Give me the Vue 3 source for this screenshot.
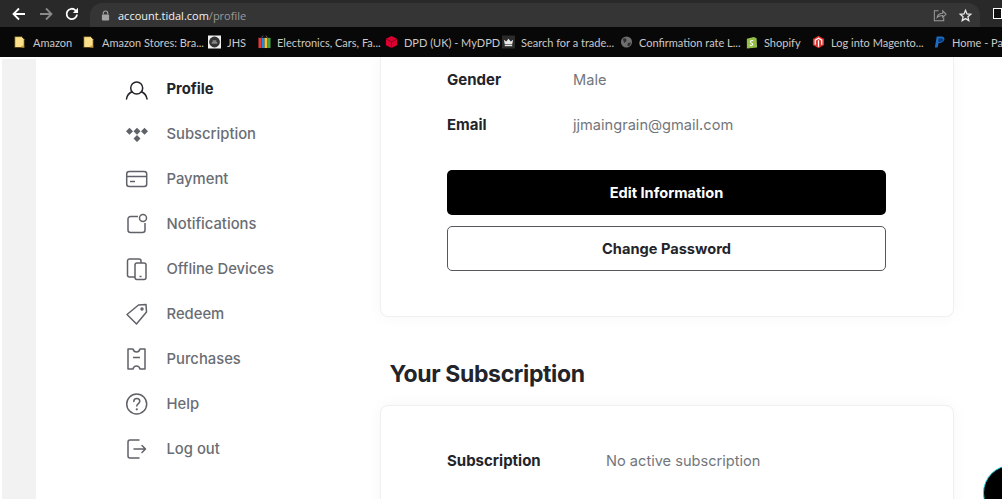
<template>
  <div class="window">
    <!-- Browser toolbar -->
    <header class="toolbar">
      <div class="nav-buttons">
        <svg class="tb-icon" viewBox="0 0 16 16"><path d="M14 8H3M8 2.500 2.500 8 8 13.500" fill="none" stroke="#fff" stroke-width="1.800" /></svg>
        <svg class="tb-icon" viewBox="0 0 16 16"><path d="M2 8h11M8 2.500 13.500 8 8 13.500" fill="none" stroke="#8a8a8a" stroke-width="1.800" /></svg>
        <svg class="tb-icon" viewBox="0 0 16 16"><path d="M13 8.500A5.200 5.200 0 1 1 11.500 4.300L13.500 6.200" fill="none" stroke="#fff" stroke-width="1.800" /><path d="M14 1.800V7H8.800z" fill="#fff" /></svg>
      </div>
      <div class="omnibox">
        <svg class="lock" viewBox="0 0 10 12"><path d="M2.500 5V3.500a2.500 2.500 0 0 1 5 0V5" fill="none" stroke="#a5a5a5" stroke-width="1.200" /><rect x="1" y="5" width="8" height="6.500" rx="1" fill="#a5a5a5" /></svg>
        <span class="url">account.tidal.com<span class="url-path">/profile</span></span>
        <svg class="omni-icon" viewBox="0 0 16 16"><path d="M7 3H2.500v10.500h10V10" fill="none" stroke="#9a9a9a" stroke-width="1.100" /><path d="M5.500 10c.5-3 3-4.500 6-4.500V3l3.500 3.700-3.500 3.300V8c-2.500 0-4.500.5-6 2z" fill="none" stroke="#9a9a9a" stroke-width="1.100" /></svg>
        <svg class="omni-icon star" viewBox="0 0 16 16"><path d="M8 2.500 9.600 6.300l4 .4-3 2.700.9 4L8 11.300l-3.500 2.100.9-4-3-2.700 4-.4z" fill="none" stroke="#e8e8e8" stroke-width="1.400" /></svg>
      </div>
      <div class="ext-box"></div>
    </header>

    <!-- Bookmarks -->
    <nav class="bookmarks">
      <div v-for="b in bookmarks" :key="b.x" class="bookmark" :style="{ width: b.w + 'px' }">
        <svg class="bm-icon" viewBox="0 0 14 14" v-html="bmIcons[b.icon]"></svg>
        <span class="bm-label">{{ b.label }}</span>
      </div>
    </nav>

    <!-- Page -->
    <div class="page">
      <div class="strip"></div>

      <aside class="sidebar">
        <div v-for="item in menu" :key="item.label" class="menu-item" :class="{ active: item.active }">
          <svg class="menu-icon" viewBox="0 0 24 24" v-html="item.svg"></svg>
          <span>{{ item.label }}</span>
        </div>
      </aside>

      <main class="content">
        <section class="card card-top">
          <div class="row"><span class="row-label">Gender</span><span class="row-value">Male</span></div>
          <div class="row"><span class="row-label">Email</span><span class="row-value">jjmaingrain@gmail.com</span></div>
          <button class="btn btn-dark">Edit Information</button>
          <button class="btn btn-light">Change Password</button>
        </section>

        <h2 class="section-title">Your Subscription</h2>

        <section class="card card-sub">
          <div class="row"><span class="row-label wide">Subscription</span><span class="row-value">No active subscription</span></div>
        </section>
      </main>

      <div class="chat-bubble"></div>
    </div>
  </div>
</template>

<script setup>
const bmIcons = {
  folder: '<path d="M.8 1.200h7.400l2.800 2.800v9H.8z" fill="#fde08a" stroke="#3a2c08" stroke-width=".8" /><path d="M8 11h3v2H8z" fill="#c99a3c" />',
  jhs: '<rect x="0" y="0" width="14" height="14" fill="#f0f0f0" /><circle cx="7" cy="7" r="5.800" fill="#333" /><path d="M4 8h6M5 6h4" stroke="#ccc" stroke-width="1" />',
  bars: '<path d="M4 2 5.500 0M10 2 8.500 0" stroke="#888" stroke-width=".8" /><rect x="0.500" y="2.500" width="3.300" height="11" fill="#e53935" /><rect x="3.800" y="2.500" width="3.200" height="11" fill="#1e88e5" /><rect x="7" y="2.500" width="3.200" height="11" fill="#fbc02d" /><rect x="10.200" y="2.500" width="3.300" height="11" fill="#43a047" />',
  dpd: '<path d="M7 .5 13 3.500v7L7 13.500 1 10.500v-7z" fill="#dc0032" /><path d="M1 3.500 7 7l6-3.500M7 7v6.500" stroke="#5c0015" stroke-width=".7" fill="none" />',
  crown: '<rect width="14" height="14" fill="#2b2b2b" /><path d="M2 4.500 4.500 6.500 7 3.500l2.500 3L12 4.500 11 9.500H3z" fill="#e6e6e6" /><rect x="3" y="10" width="8" height="1.500" fill="#e6e6e6" />',
  globe: '<circle cx="7" cy="7" r="6" fill="#6e6e6e" /><path d="M3 3.500 6.500 3 7 6 4.500 8zM8.500 8 12 7.500 10 11.500 8 11z" fill="#2e2e2e" />',
  shopify: '<path d="M2 3.500 9.500 1.500 12.500 3l.5 10-11 1z" fill="#95bf47" /><path d="M8.800 5.500C7 5 5.500 5.800 5.800 7s2.500 1.200 2.500 2.500S6.500 11 5 10.300" fill="none" stroke="#fff" stroke-width="1.100" />',
  magento: '<path d="M7 .3 13 3.800v6.500L7 13.700 1 10.300V3.800z" fill="#e0322d" /><path d="M3.500 10V5L7 3l3.500 2v5M7 5v7" fill="none" stroke="#fff" stroke-width="1.300" />',
  paypal: '<path d="M4 1h5c3 0 4 2 3 4s-3 3-5 3H6l-1 5H2z" fill="#1c6fc4" /><path d="M6 3h3c2 0 2.500 1.500 2 2.500S9 7 7.500 7H5.500z" fill="#0b3a80" />'
}

const bookmarks = [
  { label: 'Amazon', icon: 'folder', x: 1, w: 69 },
  { label: 'Amazon Stores: Bra...', icon: 'folder', x: 2, w: 125 },
  { label: 'JHS', icon: 'jhs', x: 3, w: 50 },
  { label: 'Electronics, Cars, Fa...', icon: 'bars', x: 4, w: 127 },
  { label: 'DPD (UK) - MyDPD', icon: 'dpd', x: 5, w: 117 },
  { label: 'Search for a trade...', icon: 'crown', x: 6, w: 118 },
  { label: 'Confirmation rate L...', icon: 'globe', x: 7, w: 125 },
  { label: 'Shopify', icon: 'shopify', x: 8, w: 67 },
  { label: 'Log into Magento...', icon: 'magento', x: 9, w: 121 },
  { label: 'Home - Pay', icon: 'paypal', x: 10, w: 69 }
]

const menu = [
  {
    label: 'Profile',
    active: true,
    svg: '<g fill="none" stroke="#23242a" stroke-width="1.500" stroke-linecap="round"><circle cx="11.700" cy="11" r="6" /><path d="M1.500 22c.5-3.500 2.500-6 5.500-7.300M22 22c-.5-3.500-2.500-6-5.500-7.300" /></g>'
  },
  {
    label: 'Subscription',
    svg: '<g fill="#5f6268"><path d="M4.500 5.800 8 9.300l-3.500 3.500L1 9.300zM12 5.800l3.500 3.500-3.500 3.500-3.500-3.500zM19.500 5.800l3.500 3.500-3.500 3.500L16 9.300zM12 13l3.500 3.500L12 20l-3.500-3.500z" /></g>'
  },
  {
    label: 'Payment',
    svg: '<g fill="none" stroke="#5f6268" stroke-width="1.500"><rect x="1.700" y="4.500" width="20" height="15" rx="2.500" /><path d="M1.700 9.500h20M5 14.500h5" /></g>'
  },
  {
    label: 'Notifications',
    svg: '<g fill="none" stroke="#5f6268" stroke-width="1.500"><path d="M13 4.500H5.500a2.500 2.500 0 0 0-2.500 2.500v11a2.500 2.500 0 0 0 2.500 2.500h12a2.500 2.500 0 0 0 2.500-2.500v-7" /><circle cx="18" cy="6" r="3.500" /></g>'
  },
  {
    label: 'Offline Devices',
    svg: '<g fill="none" stroke="#5f6268" stroke-width="1.500"><path d="M10 20H4.500a2 2 0 0 1-2-2V4a2 2 0 0 1 2-2H14a2 2 0 0 1 2 2v2" /><rect x="10" y="6" width="11" height="16.500" rx="2" /><path d="M14.500 19.500h2" /></g>'
  },
  {
    label: 'Redeem',
    svg: '<g fill="none" stroke="#5f6268" stroke-width="1.500" stroke-linejoin="round"><path d="M2 12.500 13.500 3l7.500-.5.500 7.500L11.500 22z" /><circle cx="17" cy="7" r="1" /></g>'
  },
  {
    label: 'Purchases',
    svg: '<g fill="none" stroke="#5f6268" stroke-width="1.500" stroke-linejoin="round"><path d="M3 2h5c.5 2 1.500 3 3.500 3S14.500 4 15 2h5v20h-5c-.5-2-1.500-3-3.500-3S8.500 20 8 22H3zM8 10.500h7" /></g>'
  },
  {
    label: 'Help',
    svg: '<g fill="none" stroke="#5f6268" stroke-width="1.500" stroke-linecap="round"><circle cx="11.700" cy="12" r="10" /><path d="M8.800 9.500c0-1.800 1.300-3 3-3s3 1.200 3 2.800c0 2.200-3 2.400-3 4.700" /></g><circle cx="11.800" cy="17.300" r="1.100" fill="#5f6268" />'
  },
  {
    label: 'Log out',
    svg: '<g fill="none" stroke="#5f6268" stroke-width="1.500" stroke-linecap="round" stroke-linejoin="round"><path d="M14 3H5a2 2 0 0 0-2 2v14a2 2 0 0 0 2 2h9M9 12h11.500M17 8.500l3.500 3.500-3.500 3.500" /></g>'
  }
]
</script>

<style>
html, body { margin: 0; background: #fff; overflow: hidden; }
</style>

<style scoped>
.window {
  width: 1002px;
  height: 499px;
  display: flex;
  flex-direction: column;
  overflow: hidden;
  font-family: Inter, "Open Sans", sans-serif;
  background: #fff;
}

/* Browser chrome */
.toolbar {
  height: 27px;
  flex: none;
  display: flex;
  align-items: center;
  background: #292929;
  box-sizing: border-box;
  padding-left: 11px;
}
.nav-buttons {
  display: flex;
  gap: 10.5px;
  width: 79px;
}
.tb-icon { width: 16px; height: 16px; }
.omnibox {
  width: 890px;
  height: 24px;
  flex: none;
  margin-top: 3px;
  align-self: flex-start;
  border-radius: 12px 12px 0 0;
  background: #353535;
  display: flex;
  align-items: center;
  padding-left: 11px;
  box-sizing: border-box;
}
.lock { width: 9px; height: 11px; margin-right: 8px; }
.url { font-size: 11px; color: #f2f2f2; font-family: "Open Sans", sans-serif; flex: 1; }
.url-path { color: #9a9a9a; }
.omni-icon { width: 15px; height: 15px; margin-right: 11px; }
.star { margin-right: 7px; }
.ext-box {
  width: 9px;
  height: 11px;
  margin-left: 13px;
  border: 1.5px solid #fff;
  box-sizing: border-box;
  background: #111;
}
.bookmarks {
  height: 30px;
  flex: none;
  display: flex;
  align-items: center;
  background: #080808;
  padding-left: 14px;
  box-sizing: border-box;
  overflow: hidden;
}
.bookmark {
  flex: none;
  display: flex;
  align-items: center;
  gap: 6px;
  overflow: hidden;
  white-space: nowrap;
}
.bm-icon { width: 13px; height: 14px; flex: none; }
.bm-label {
  font-size: 11px;
  color: #c9c9c9;
  font-family: Lato, "Open Sans", sans-serif;
}

/* Page */
.page {
  position: relative;
  flex: 1;
  min-height: 0;
  display: flex;
  overflow: hidden;
}
.strip {
  width: 34px;
  margin: 2px 0 0 2px;
  flex: none;
  background: #f2f2f2;
}
.sidebar {
  width: 343.5px;
  flex: none;
  padding: 10px 0 0 89px;
  box-sizing: border-box;
}
.menu-item {
  height: 44.9px;
  display: flex;
  align-items: center;
  gap: 17.5px;
  font-size: 14.8px;
  font-weight: 500;
  color: #6a6d73;
}
.menu-item.active {
  font-weight: 700;
  color: #23242a;
}
.menu-icon { width: 24px; height: 24px; flex: none; }
.content {
  width: 574px;
  flex: none;
}
.card {
  background: #fff;
  border: 1px solid #f0f0f0;
  border-radius: 8px;
  box-shadow: 0 0 16px rgba(0, 0, 0, 0.04);
  padding: 0 67px 0 66.5px;
}
.card-top {
  border-top: none;
  border-top-left-radius: 0;
  border-top-right-radius: 0;
  padding-bottom: 45px;
}
.row {
  height: 45px;
  display: flex;
  align-items: center;
  font-size: 15px;
}
.row-label {
  width: 126px;
  font-weight: 700;
  color: #23242a;
}
.row-label.wide { width: 159px; }
.row-value { color: #72767c; font-size: 14.6px; }
.btn {
  display: block;
  width: 439px;
  height: 45px;
  border-radius: 5px;
  font-family: inherit;
  font-size: 14.6px;
  font-weight: 700;
}
.btn-dark {
  margin-top: 23px;
  background: #000;
  color: #fff;
  border: none;
}
.btn-light {
  margin-top: 11px;
  background: #fff;
  color: #23242a;
  border: 1px solid #55585c;
}
.section-title {
  margin: 41px 0 15px 10px;
  height: 32px;
  line-height: 32px;
  font-size: 23px;
  letter-spacing: -0.35px;
  font-weight: 700;
  color: #23242a;
}
.card-sub {
  height: 200px;
  padding-top: 32px;
}
.chat-bubble {
  position: absolute;
  left: 983px;
  top: 408px;
  width: 56px;
  height: 56px;
  border-radius: 50%;
  background: #000;
  border: 1px solid #25d8e8;
  box-sizing: border-box;
}
</style>
